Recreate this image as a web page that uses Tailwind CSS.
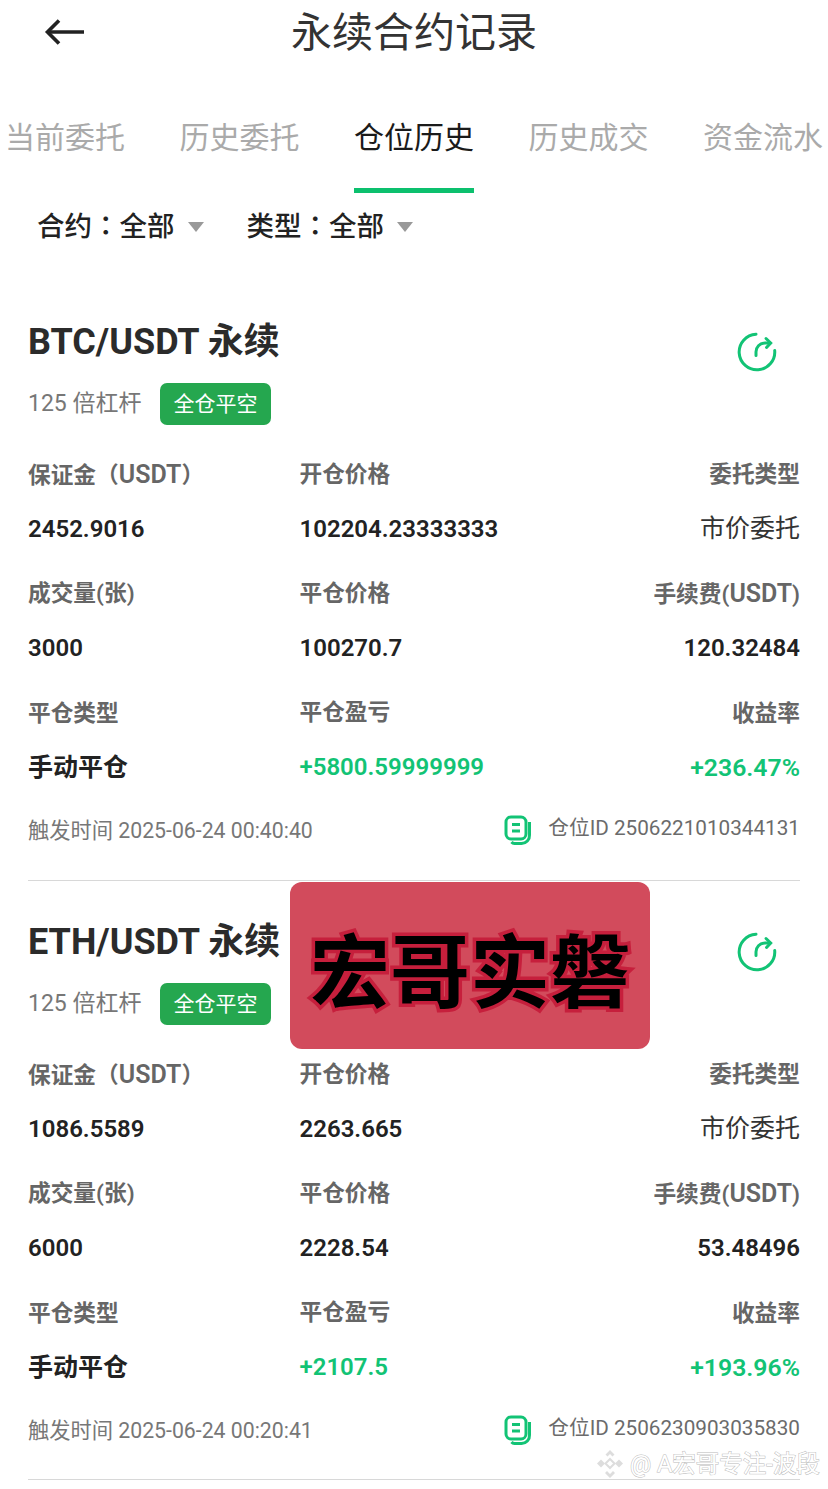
<!doctype html>
<html lang="zh"><head><meta charset="utf-8"><script src="https://cdn.jsdelivr.net/npm/@tailwindcss/browser@4"></script></head>
<body class="bg-white">
<div class="relative w-[828px] h-[1489px] overflow-hidden bg-white font-['Roboto','Noto_Sans_CJK_SC',sans-serif] text-[#222]">

<header class="relative h-[64px] flex items-start justify-center">
  <svg class="absolute left-[44px] top-[18px]" width="42" height="28" viewBox="0 0 42 28" fill="none" stroke="#222" stroke-width="3.6"><path d="M40 14H4"/><path d="M15 2.5 3.5 14 15 25.5"/></svg>
  <h1 class="text-[41px] leading-[58px] font-normal text-[#333] font-['Noto_Sans_CJK_SC',sans-serif]">永续合约记录</h1>
</header>

<nav class="mt-[46px] h-[83px] flex justify-between px-[5px] text-[30px] font-['Noto_Sans_CJK_SC',sans-serif] text-[#aaa]">
  <span class="w-[120px] leading-[50px] text-center">当前委托</span>
  <span class="w-[120px] leading-[50px] text-center">历史委托</span>
  <span class="w-[120px] leading-[50px] text-center text-[#1a1a1a] border-b-[5px] border-[#0cc06e]">仓位历史</span>
  <span class="w-[120px] leading-[50px] text-center">历史成交</span>
  <span class="w-[120px] leading-[50px] text-center">资金流水</span>
</nav>

<div class="h-[88px] pl-[37px] flex items-start pt-[11px] text-[27.5px] leading-[40px] font-['Noto_Sans_CJK_SC',sans-serif] font-medium text-[#222]">
  <span>合约<span lang="zh-TW" class="font-['Noto_Sans_CJK_TC',sans-serif]">：</span>全部</span><span class="ml-[13px] mt-[18px] w-0 h-0 border-x-[8px] border-x-transparent border-t-[10px] border-t-[#999]"></span>
  <span class="ml-[43px]">类型<span lang="zh-TW" class="font-['Noto_Sans_CJK_TC',sans-serif]">：</span>全部</span><span class="ml-[13px] mt-[18px] w-0 h-0 border-x-[8px] border-x-transparent border-t-[10px] border-t-[#999]"></span>
</div>

<section class="mx-[28px] h-[600px] pt-[39px] border-b border-[#d8d8d8]">
  <div class="flex justify-between h-[44px]">
    <h2 class="text-[36px] leading-[44px] font-bold text-[#2b2b2b]">BTC/USDT 永续</h2>
    <svg class="mr-[22px] mt-[11px]" width="42" height="42" viewBox="0 0 42 42" fill="none" stroke="#12c375" stroke-width="3" stroke-linecap="round"><path d="M20 3.2A17.8 17.8 0 1 0 38.7 19.5"/><path d="M20 24.5v-3a9 9 0 0 1 9-9.500h5"/><path d="M30 7.500 34.700 12 30.500 16.500"/></svg>
  </div>
  <div class="mt-[19px] h-[42px] flex items-center">
    <span class="text-[23px] text-[#777] w-[132px]">125 倍杠杆</span>
    <span class="w-[111px] h-[42px] rounded-[7px] bg-[#25a74f] text-white text-[21px] flex items-center justify-center pt-px">全仓平空</span>
  </div>
  <div class="mt-[30px] grid grid-cols-[271.500px_1fr_auto] grid-rows-[53px_66px_53px_67px_53px_63px] text-[22.700px] leading-[40px] font-semibold text-[#666]">
    <span>保证金（<span class="text-[25px]">USDT</span>）</span><span>开仓价格</span><span class="text-right">委托类型</span>
    <span class="text-[#222] text-[24px] mt-px">2452.9016</span><span class="text-[#222] text-[24px] mt-px">102204.23333333</span><span class="text-[#333] text-right text-[25px] font-normal mt-px">市价委托</span>
    <span>成交量(张)</span><span>平仓价格</span><span class="text-right">手续费(<span class="text-[25px]">USDT</span>)</span>
    <span class="text-[#222] text-[24px] mt-px">3000</span><span class="text-[#222] text-[24px] mt-px">100270.7</span><span class="text-[#222] text-right text-[24px] mt-px">120.32484</span>
    <span>平仓类型</span><span class="-mt-px">平仓盈亏</span><span class="text-right">收益率</span>
    <span class="text-[#222] text-[25px] font-bold mt-px">手动平仓</span><span class="text-[#12c375] text-[24px]">+5800.59999999</span><span class="text-[#12c375] text-right text-[24.800px] mt-px">+236.47%</span>
  </div>
  <div class="flex justify-between items-start h-[40px] text-[21.250px] leading-[40px] text-[#777]">
    <span class="mt-[1px]">触发时间 2025-06-24 00:40:40</span>
    <span class="flex items-start -mt-[2px] text-[20.700px] text-[#6b6b6b]">
      <svg class="mr-[16px] mt-[7px]" width="28" height="31" viewBox="0 0 28 31" fill="none" stroke="#12c375" stroke-width="3"><rect x="2" y="2" width="20" height="22" rx="5"/><path d="M8 9.500h8M8 16h8"/><path d="M25.500 7v13a8 8 0 0 1-8 8.500h-7a4 4 0 0 1-3-1.500"/></svg>
      仓位ID 2506221010344131</span>
  </div>
</section>

<section class="mx-[28px] h-[599px] pt-[39px] border-b border-[#d8d8d8]">
  <div class="flex justify-between h-[44px]">
    <h2 class="text-[36px] leading-[44px] font-bold text-[#2b2b2b]">ETH/USDT 永续</h2>
    <svg class="mr-[22px] mt-[11px]" width="42" height="42" viewBox="0 0 42 42" fill="none" stroke="#12c375" stroke-width="3" stroke-linecap="round"><path d="M20 3.2A17.8 17.8 0 1 0 38.7 19.5"/><path d="M20 24.5v-3a9 9 0 0 1 9-9.500h5"/><path d="M30 7.500 34.700 12 30.500 16.500"/></svg>
  </div>
  <div class="mt-[19px] h-[42px] flex items-center">
    <span class="text-[23px] text-[#777] w-[132px]">125 倍杠杆</span>
    <span class="w-[111px] h-[42px] rounded-[7px] bg-[#25a74f] text-white text-[21px] flex items-center justify-center pt-px">全仓平空</span>
  </div>
  <div class="mt-[30px] grid grid-cols-[271.500px_1fr_auto] grid-rows-[53px_66px_53px_67px_53px_63px] text-[22.700px] leading-[40px] font-semibold text-[#666]">
    <span>保证金（<span class="text-[25px]">USDT</span>）</span><span>开仓价格</span><span class="text-right">委托类型</span>
    <span class="text-[#222] text-[24px] mt-px">1086.5589</span><span class="text-[#222] text-[24px] mt-px">2263.665</span><span class="text-[#333] text-right text-[25px] font-normal mt-px">市价委托</span>
    <span>成交量(张)</span><span>平仓价格</span><span class="text-right">手续费(<span class="text-[25px]">USDT</span>)</span>
    <span class="text-[#222] text-[24px] mt-px">6000</span><span class="text-[#222] text-[24px] mt-px">2228.54</span><span class="text-[#222] text-right text-[24px] mt-px">53.48496</span>
    <span>平仓类型</span><span class="-mt-px">平仓盈亏</span><span class="text-right">收益率</span>
    <span class="text-[#222] text-[25px] font-bold mt-px">手动平仓</span><span class="text-[#12c375] text-[24px]">+2107.5</span><span class="text-[#12c375] text-right text-[24.800px] mt-px">+193.96%</span>
  </div>
  <div class="flex justify-between items-start h-[40px] text-[21.250px] leading-[40px] text-[#777]">
    <span class="mt-[1px]">触发时间 2025-06-24 00:20:41</span>
    <span class="flex items-start -mt-[2px] text-[20.700px] text-[#6b6b6b]">
      <svg class="mr-[16px] mt-[7px]" width="28" height="31" viewBox="0 0 28 31" fill="none" stroke="#12c375" stroke-width="3"><rect x="2" y="2" width="20" height="22" rx="5"/><path d="M8 9.500h8M8 16h8"/><path d="M25.500 7v13a8 8 0 0 1-8 8.500h-7a4 4 0 0 1-3-1.500"/></svg>
      仓位ID 2506230903035830</span>
  </div>
</section>

<div class="absolute left-[290px] top-[882px] w-[360px] h-[167px] rounded-[12px] bg-[#d24b5c] flex items-center justify-center">
  <span class="text-[80px] leading-none font-bold text-black font-['Noto_Sans_CJK_SC',sans-serif] [-webkit-text-stroke:7px_#c61f3c] [paint-order:stroke_fill]">宏哥实磐</span>
</div>

<div class="absolute left-[596px] top-[1449px] flex items-center text-[23.500px] leading-[30px] text-white [-webkit-text-stroke:1px_#bbb] [paint-order:stroke_fill]">
  <svg class="mr-[6px]" width="28" height="30" viewBox="0 0 28 30" fill="#ddd"><path d="M14 1l4.500 4.500-2 2L14 5l-2.500 2.500-2-2zM5 10.500l4 4-4 4-4-4zM23 10.500l4 4-4 4-4-4zM14 29l-5-5 2-2 3 3 3-3 2 2z"/><path d="M14 10l4.500 4.500L14 19l-4.500-4.500z" fill="none" stroke="#ddd" stroke-width="2"/></svg>
  <span>@ A宏哥专注-波段</span>
</div>

</div>
</body></html>
